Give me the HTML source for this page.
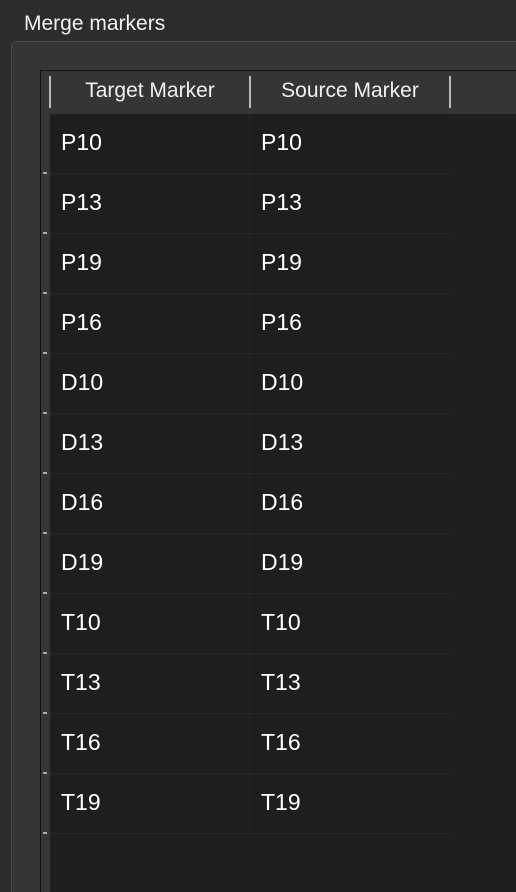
<html style="overflow:hidden;height:892px"><head><style>
body{margin:0;width:516px;height:892px;background:#2c2c2c;font-family:"Liberation Sans",sans-serif;overflow:hidden;position:relative;color:#fff}
.title{position:absolute;left:24px;top:12px;font-size:21px;color:#f0f0f0}
.grp{position:absolute;left:11px;top:41px;width:510px;height:860px;background:#353535;border:1px solid #484848;border-radius:5px}
.tbl{position:absolute;left:40px;top:70px;width:476px;height:822px;background:#1f1f1f;border-left:1px solid #111;border-top:1px solid #111;overflow:hidden}
.hdr{position:absolute;left:0;top:0;width:480px;height:43px;background:#353535}
.vh{position:absolute;left:0;top:43px;width:9px;height:800px;background:#353535}
.sep{position:absolute;top:5px;width:2px;height:32px;background:#bbb}
.h{position:absolute;top:8px;font-size:21px;color:#f0f0f0;text-align:center;width:200px}
.row{position:absolute;left:9px;width:400px;height:59px;border-bottom:1px solid #282828;background:#1e1e1e}
.row span{position:absolute;top:15px;font-size:23px}
.cl{position:absolute;left:199px;top:0;width:1px;height:60px;background:#262626}
.dash{position:absolute;left:2px;width:4px;height:2px;background:#aaa}
</style></head><body>
<div class="title">Merge markers</div>
<div class="grp"></div>
<div class="tbl">
<div class="hdr"><div class="sep" style="left:8px"></div><div class="h" style="left:9px">Target Marker</div><div class="sep" style="left:208px"></div><div class="h" style="left:209px">Source Marker</div><div class="sep" style="left:408px"></div></div>
<div class="vh"></div>
<div id="rows"></div>
</div>
<script>
var n=["P10","P13","P19","P16","D10","D13","D16","D19","T10","T13","T16","T19"],h="";
n.forEach(function(t,i){var y=43+i*60;h+='<div class="row" style="top:'+y+'px"><span style="left:11px">'+t+'</span><div class="cl"></div><span style="left:211px">'+t+'</span></div><div class="dash" style="top:'+(y+58)+'px"></div>';});
document.getElementById("rows").innerHTML=h;
</script>
</body></html>
